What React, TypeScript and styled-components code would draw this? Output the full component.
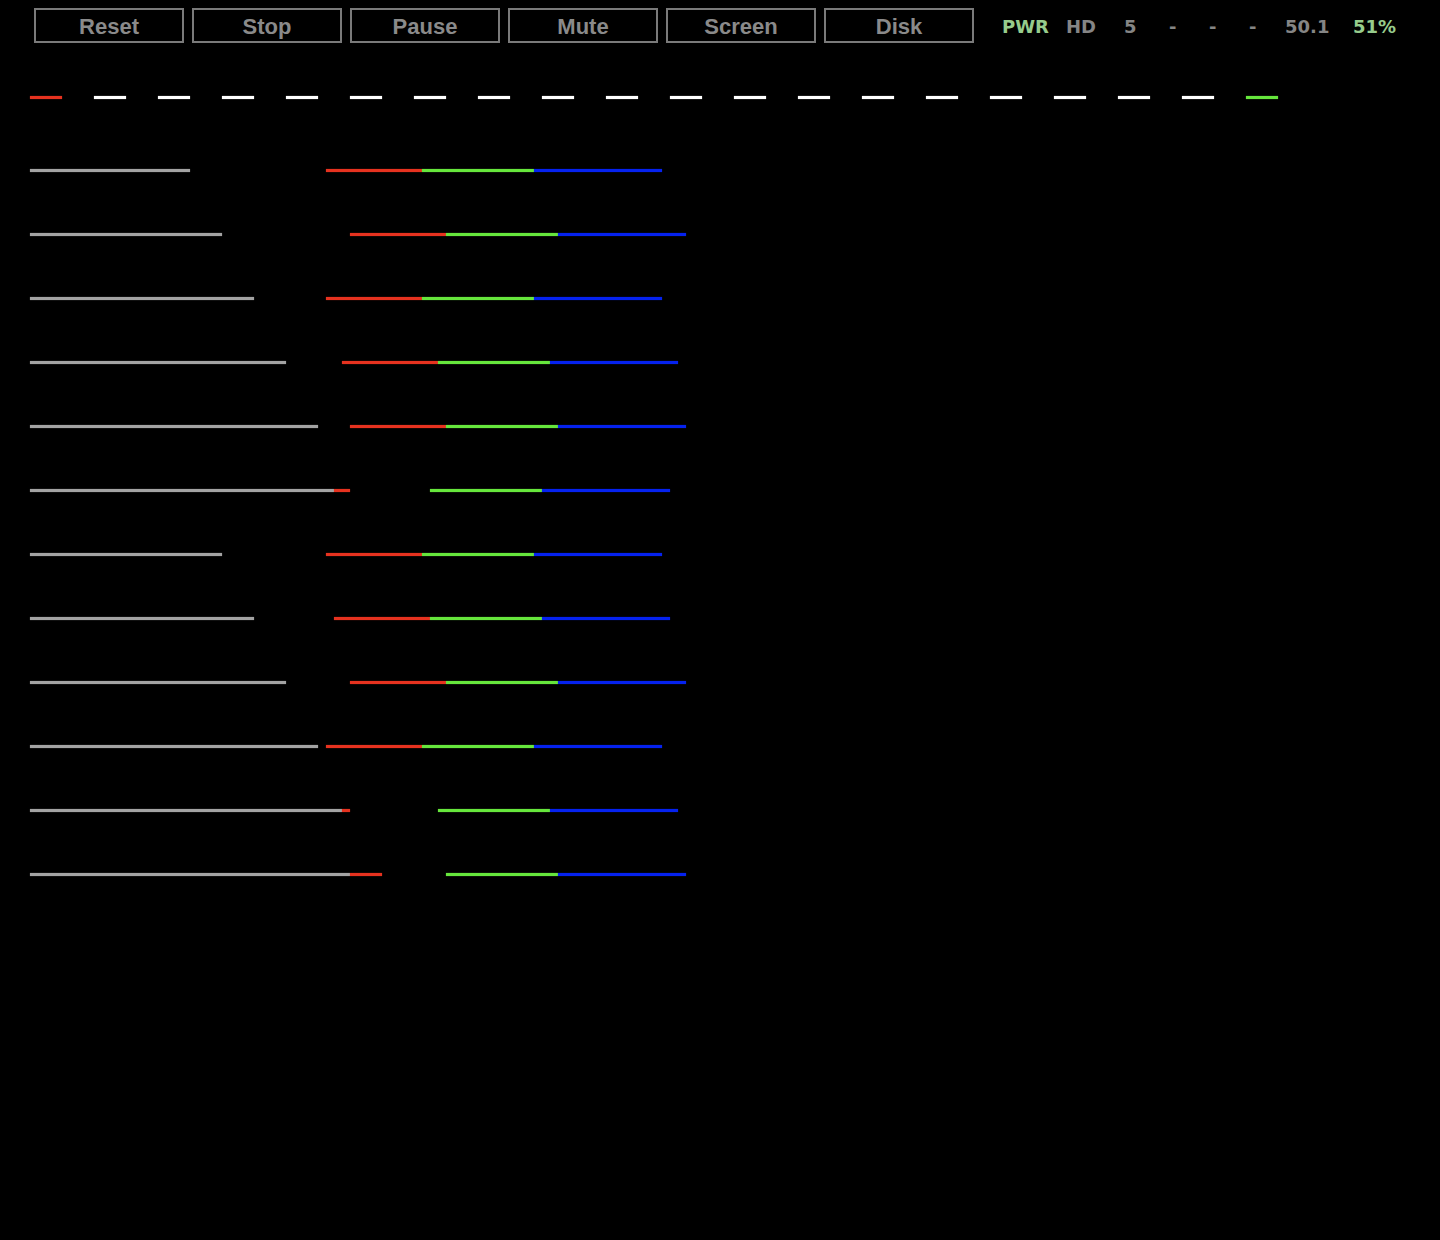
import React from 'react';
import styled, { createGlobalStyle } from 'styled-components';

const GlobalStyle = createGlobalStyle`
    html, body {
        margin: 0;
        padding: 0;
        background: #000;
    }
    body {
        width: 1440px;
        min-height: 1240px;
        font-family: "Liberation Sans", Arial, sans-serif;
    }
`;

const COLORS = {
    gray: '#a3a3a3',
    red: '#e6321f',
    green: '#66e63c',
    blue: '#0522ef',
    white: '#ffffff',
};

const Page = styled.div`
    display: flex;
    flex-direction: column;
    padding-top: 8px;
    min-height: 1232px;
    background: #000;
`;

const Toolbar = styled.div`
    display: flex;
    align-items: center;
    height: 35px;
    padding-left: 34px;
    gap: 8px;
`;

const Button = styled.button`
    width: 150px;
    height: 35px;
    box-sizing: border-box;
    padding: 2px 0 0;
    background: #000;
    border: 2px solid #7a7a7a;
    color: #8a8a8a;
    font-family: "Liberation Sans", Arial, sans-serif;
    font-weight: 700;
    font-size: 22px;
    line-height: 1;
    cursor: pointer;
`;

const Status = styled.div`
    display: flex;
    align-items: center;
    margin-left: 20px;
    padding-top: 1px;
    font-family: "DejaVu Sans", Verdana, sans-serif;
    font-weight: 700;
    font-size: 18px;
`;

const Stat = styled.span<{ $w: number; $on?: boolean }>`
    width: ${p => p.$w}px;
    color: ${p => (p.$on ? '#96cc8c' : '#858585')};
    white-space: nowrap;
`;

const DashRow = styled.div`
    display: flex;
    gap: 32px;
    padding-left: 30px;
    margin-top: 53px;
`;

const Dash = styled.span<{ $color: string }>`
    width: 32px;
    height: 3px;
    background: ${p => p.$color};
    box-shadow: 0 0 1px ${p => p.$color};
`;

const Chart = styled.div`
    display: flex;
    flex-direction: column;
    margin-top: 70px;
`;

const Row = styled.div`
    position: relative;
    height: 64px;
`;

const Segment = styled.span<{ $color: string }>`
    position: absolute;
    top: 0;
    height: 3px;
    background: ${p => p.$color};
    box-shadow: 0 0 1px ${p => p.$color};
`;

const buttons = ['Reset', 'Stop', 'Pause', 'Mute', 'Screen', 'Disk'];

const stats = [
    { label: 'PWR', w: 64, on: true },
    { label: 'HD', w: 58 },
    { label: '5', w: 45 },
    { label: '-', w: 40 },
    { label: '-', w: 40 },
    { label: '-', w: 36 },
    { label: '50.1', w: 68 },
    { label: '51%', w: 60, on: true },
];

// gray bar end, red span, green start (green 112 wide, blue 128 after it)
const rows: { gray: number; red: [number, number]; green: number }[] = [
    { gray: 190, red: [326, 422], green: 422 },
    { gray: 222, red: [350, 446], green: 446 },
    { gray: 254, red: [326, 422], green: 422 },
    { gray: 286, red: [342, 438], green: 438 },
    { gray: 318, red: [350, 446], green: 446 },
    { gray: 334, red: [334, 350], green: 430 },
    { gray: 222, red: [326, 422], green: 422 },
    { gray: 254, red: [334, 430], green: 430 },
    { gray: 286, red: [350, 446], green: 446 },
    { gray: 318, red: [326, 422], green: 422 },
    { gray: 342, red: [342, 350], green: 438 },
    { gray: 350, red: [350, 382], green: 446 },
];

const dashes = Array.from({ length: 20 }, (_, i) =>
    i === 0 ? COLORS.red : i === 19 ? COLORS.green : COLORS.white
);

export default function App() {
    return (
        <Page>
            <GlobalStyle />
            <Toolbar>
                {buttons.map(b => (
                    <Button key={b}>{b}</Button>
                ))}
                <Status>
                    {stats.map((s, i) => (
                        <Stat key={i} $w={s.w} $on={s.on}>
                            {s.label}
                        </Stat>
                    ))}
                </Status>
            </Toolbar>

            <DashRow>
                {dashes.map((c, i) => (
                    <Dash key={i} $color={c} />
                ))}
            </DashRow>

            <Chart>
                {rows.map((r, i) => {
                    const segs = [
                        { from: 30, to: r.gray, color: COLORS.gray },
                        { from: r.red[0], to: r.red[1], color: COLORS.red },
                        { from: r.green, to: r.green + 112, color: COLORS.green },
                        { from: r.green + 112, to: r.green + 240, color: COLORS.blue },
                    ];
                    return (
                        <Row key={i}>
                            {segs.map((s, j) => (
                                <Segment
                                    key={j}
                                    $color={s.color}
                                    style={{ left: s.from, width: s.to - s.from }}
                                />
                            ))}
                        </Row>
                    );
                })}
            </Chart>
        </Page>
    );
}
